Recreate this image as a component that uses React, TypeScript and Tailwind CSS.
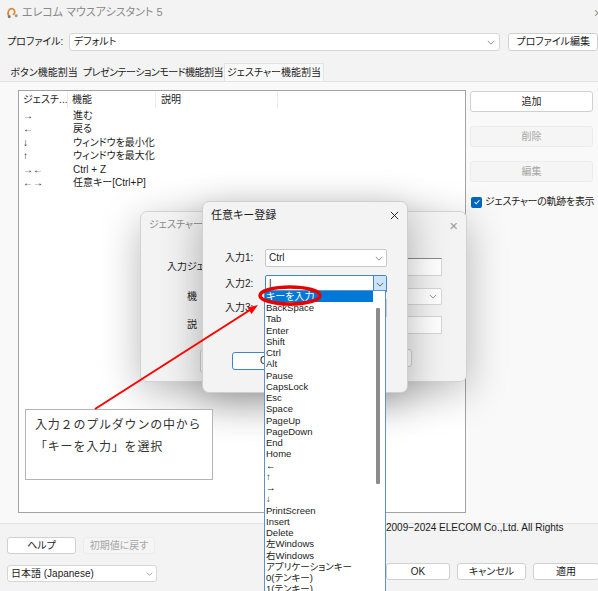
import type { FC } from 'react';

const Chevron: FC<{ className?: string }> = ({ className }) => (
  <svg viewBox="0 0 10 6" className={className} fill="none" stroke="currentColor" strokeWidth="1">
    <path d="M1 1l4 4 4-4" />
  </svg>
);

const Logo: FC = () => (
  <svg viewBox="0 0 14 14" className="w-[13px] h-[13px]">
    <path d="M3 11 C1 7 3 2 7 3 C10 4 10 8 8 9" fill="none" stroke="#e8822a" strokeWidth="1.8" strokeLinecap="round" />
    <circle cx="3.5" cy="11.5" r="1.6" fill="#7a7a7a" />
    <circle cx="11" cy="10.5" r="1.6" fill="#9a9a9a" />
  </svg>
);

const gestures = [
  ['→', '進む'],
  ['←', '戻る'],
  ['↓', 'ウィンドウを最小化'],
  ['↑', 'ウィンドウを最大化'],
  ['→←', 'Ctrl + Z'],
  ['←→', '任意キー[Ctrl+P]'],
];

const keys = [
  'キーを入力', 'BackSpace', 'Tab', 'Enter', 'Shift', 'Ctrl', 'Alt', 'Pause', 'CapsLock', 'Esc',
  'Space', 'PageUp', 'PageDown', 'End', 'Home', '←', '↑', '→', '↓', 'PrintScreen', 'Insert',
  'Delete', '左Windows', '右Windows', 'アプリケーションキー', '0(テンキー)', '1(テンキー)', '2(テンキー)',
];

export default function App() {
  return (
    <div className="relative w-[598px] h-[591px] overflow-hidden bg-[#f3f3f3] text-[#1b1b1b] text-[10px] leading-none font-['Liberation_Sans','Noto_Sans_CJK_JP',sans-serif] [font-feature-settings:'palt']">
      {/* Title bar */}
      <div className="flex items-center h-[25px] pl-[6px]">
        <Logo />
        <span className="ml-[3px] text-[11px] text-[#8a8a8a]">エレコム マウスアシスタント 5</span>
        <span className="ml-auto mr-[-4px] text-[14px] text-[#9a9a9a]">×</span>
      </div>

      {/* Profile row */}
      <div className="flex items-center h-[18px] mt-[8px]">
        <span className="w-[69px] pl-[7px]">プロファイル:</span>
        <div className="flex items-center w-[433px] h-[18px] px-[4px] bg-white border border-[#d6d6d6] rounded-[3px]">
          <span>デフォルト</span>
          <Chevron className="ml-auto w-[8px] h-[5px] text-[#777]" />
        </div>
        <div className="flex items-center justify-center ml-[8px] w-[90px] h-[18px] bg-white border border-[#d0d0d0] rounded-[3px]">
          プロファイル編集
        </div>
      </div>

      {/* Tabs */}
      <div className="flex items-end mt-[12px] pl-[6px] h-[18px] whitespace-nowrap">
        <div className="flex items-center justify-center w-[76px] h-[17px]">ボタン機能割当</div>
        <div className="flex items-center justify-center w-[142px] h-[17px] tracking-[-0.5px]">プレゼンテーションモード機能割当</div>
        <div className="flex items-center justify-center w-[100px] h-[18px] bg-[#f9f9f9] border border-b-0 border-[#e3e3e3]">ジェスチャー機能割当</div>
      </div>

      {/* Tab panel */}
      <div className="flex h-[443px] bg-[#f9f9f9] border-y border-[#e3e3e3]">
        <div className="ml-[18px] mt-[8px] w-[448px] h-[423px] bg-white border border-[#a3a3a3]">
          <div className="flex h-[17px] items-center whitespace-nowrap">
            <div className="w-[49px] pl-[4px] border-r border-[#ececec] h-full flex items-center overflow-hidden">ジェスチ...</div>
            <div className="w-[88px] pl-[4px] border-r border-[#ececec] h-full flex items-center">機能</div>
            <div className="w-[122px] pl-[5px] border-r border-[#ececec] h-full flex items-center">説明</div>
          </div>
          <div className="pt-[1px]">
            {gestures.map(([g, f]) => (
              <div key={f} className="flex items-center h-[13.5px]">
                <span className="w-[54px] pl-[4px]">{g}</span>
                <span>{f}</span>
              </div>
            ))}
          </div>
        </div>

        <div className="ml-[4px] mt-[9px] w-[123px] flex flex-col">
          <div className="flex items-center justify-center h-[21px] bg-white border border-[#d0d0d0] rounded-[3px]">追加</div>
          <div className="flex items-center justify-center h-[21px] mt-[14px] bg-[#f5f5f5] border border-[#ececec] rounded-[3px] text-[#a6a6a6]">削除</div>
          <div className="flex items-center justify-center h-[21px] mt-[14px] bg-[#f5f5f5] border border-[#ececec] rounded-[3px] text-[#a6a6a6]">編集</div>
          <div className="flex items-center mt-[14px] h-[12px] whitespace-nowrap">
            <div className="flex shrink-0 items-center justify-center w-[11px] h-[11px] ml-[1px] rounded-[2px] bg-[#0067c0]">
              <svg viewBox="0 0 10 10" className="w-[8px] h-[8px]" fill="none" stroke="white" strokeWidth="1.3">
                <path d="M2 5.2l2 2 4-4.4" />
              </svg>
            </div>
            <span className="ml-[3px] tracking-[-0.3px]">ジェスチャーの軌跡を表示</span>
          </div>
        </div>
      </div>

      {/* Bottom */}
      <div className="flex">
        <div className="pl-[7px] pt-[13px]">
          <div className="flex gap-[7px]">
            <div className="flex items-center justify-center w-[69px] h-[17px] bg-white border border-[#d0d0d0] rounded-[3px]">ヘルプ</div>
            <div className="flex items-center justify-center w-[72px] h-[17px] bg-[#f5f5f5] border border-[#ececec] rounded-[3px] text-[#a6a6a6]">初期値に戻す</div>
          </div>
          <div className="flex items-center mt-[11px] w-[150px] h-[17px] px-[3px] bg-white border border-[#d6d6d6] rounded-[3px]">
            <span>日本語 (Japanese)</span>
            <Chevron className="ml-auto w-[7px] h-[4px] text-[#777]" />
          </div>
        </div>
        <div className="ml-auto w-[212px] flex flex-col">
          <div className="h-[12px] mt-[-2px] flex items-center whitespace-nowrap">2009−2024 ELECOM Co.,Ltd. All Rights</div>
          <div className="flex mt-[29px] gap-[7px]">
            <div className="flex items-center justify-center w-[64px] h-[17px] bg-white border border-[#d0d0d0] rounded-[3px]">OK</div>
            <div className="flex items-center justify-center w-[69px] h-[17px] bg-white border border-[#d0d0d0] rounded-[3px]">キャンセル</div>
            <div className="flex items-center justify-center w-[66px] h-[17px] bg-white border border-[#d0d0d0] rounded-[3px] mr-[-6px]">適用</div>
          </div>
        </div>
      </div>

      {/* Back dialog: ジェスチャー編集 */}
      <div className="absolute left-[140px] top-[211px] w-[327px] h-[171px] rounded-[7px] bg-[#f3f3f3] border border-[#d2d2d2] shadow-[0_10px_40px_rgba(0,0,0,0.28)]">
        <div className="flex items-center h-[26px] pl-[8px] pr-[8px] text-[#8a8a8a]">
          <span className="w-[54px] overflow-hidden whitespace-nowrap">ジェスチャー編集</span>
          <span className="ml-auto text-[15px] text-[#9a9a9a]">×</span>
        </div>
        <div className="flex items-center mt-[20px] h-[18px]">
          <span className="w-[110px] pl-[26px]">
            <span className="block w-[36px] overflow-hidden whitespace-nowrap">入力ジェスチャー</span>
          </span>
          <div className="w-[191px] h-[18px] bg-white border border-[#d6d6d6] border-t-[#8a8a8a]" />
        </div>
        <div className="flex items-center mt-[12px] h-[17px]">
          <span className="w-[110px] pl-[46px]">機</span>
          <div className="flex items-center w-[191px] h-[17px] px-[4px] bg-white border border-[#d6d6d6] rounded-[2px]">
            <Chevron className="ml-auto w-[8px] h-[5px] text-[#777]" />
          </div>
        </div>
        <div className="flex items-center mt-[11px] h-[18px]">
          <span className="w-[110px] pl-[46px]">説</span>
          <div className="w-[191px] h-[18px] bg-white border border-[#d6d6d6]" />
        </div>
        <div className="flex mt-[15px] pl-[59px] gap-[52px]">
          <div className="w-[80px] h-[24px] bg-white border border-[#d0d0d0] rounded-[3px]" />
          <div className="w-[80px] h-[18px] bg-white border border-[#d0d0d0] rounded-[3px]" />
        </div>
      </div>

      {/* Front dialog: 任意キー登録 */}
      <div className="absolute left-[202px] top-[201px] w-[206px] h-[192px] rounded-[7px] bg-[#f3f3f3] border border-[#cfcfcf] shadow-[0_10px_40px_rgba(0,0,0,0.3)]">
        <div className="flex items-center h-[26px] pl-[8px] pr-[8px] text-[11px]">
          <span>任意キー登録</span>
          <svg viewBox="0 0 10 10" className="ml-auto w-[9px] h-[9px]" fill="none" stroke="#222" strokeWidth="1.1">
            <path d="M1 1l8 8M9 1l-8 8" />
          </svg>
        </div>
        <div className="flex items-center mt-[21px] h-[18px]">
          <span className="w-[62px] pl-[22px]">入力1:</span>
          <div className="flex items-center w-[122px] h-[18px] px-[3px] bg-white border border-[#c8c8c8] rounded-[2px]">
            <span>Ctrl</span>
            <Chevron className="ml-auto w-[8px] h-[5px] text-[#777]" />
          </div>
        </div>
        <div className="flex items-center mt-[8px] h-[18px]">
          <span className="w-[62px] pl-[22px]">入力2:</span>
          <div className="flex items-center w-[122px] h-[18px] pl-[3px] bg-white border border-[#3f86c8] rounded-[2px]">
            <span className="font-light">|</span>
            <div className="ml-auto flex items-center justify-center w-[13px] h-full bg-[#cce4f7] border-l border-[#3f86c8]">
              <Chevron className="w-[8px] h-[5px] text-[#444]" />
            </div>
          </div>
        </div>
        <div className="flex items-center mt-[6px] h-[18px]">
          <span className="w-[62px] pl-[22px]">入力3:</span>
          <div className="w-[122px] h-[18px] bg-white border border-[#c8c8c8]" />
        </div>
        <div className="flex mt-[35px] pl-[29px]">
          <div className="flex items-center pl-[27px] w-[70px] h-[18px] bg-white border-[1.5px] border-[#3f86c8] rounded-[3px]">
            <span className="block w-[7px] overflow-hidden">OK</span>
          </div>
        </div>
      </div>

      {/* Dropdown list */}
      <div className="absolute left-[264px] top-[290px] w-[122px] h-[320px] bg-white border border-[#5b94c8]">
        {keys.map((k, i) => (
          <div
            key={k}
            className={
              i === 0
                ? 'flex items-center h-[11.25px] w-[108px] pl-[1px] bg-[#0078d7] text-white text-[10px]'
                : 'flex items-center h-[11.25px] pl-[1px] text-[9.5px]'
            }
          >
            {k}
          </div>
        ))}
        <div className="absolute left-[111px] top-[17px] w-[4px] h-[176px] bg-[#8c8c8c] rounded-[1px]" />
      </div>

      {/* Callout */}
      <div className="absolute left-[25px] top-[409px] w-[188px] h-[71px] bg-white border border-[#b4b4b4] pl-[9px] pt-[3px] text-[12px] leading-[22px] tracking-[0.8px] [font-feature-settings:normal] font-['Noto_Sans_CJK_JP',sans-serif] text-[#333]">
        <div>入力２のプルダウンの中から</div>
        <div>「キーを入力」を選択</div>
      </div>

      {/* Annotation marks */}
      <svg className="absolute inset-0 pointer-events-none" width="598" height="591" viewBox="0 0 598 591">
        <line x1="95" y1="409" x2="250" y2="310" stroke="#ff0000" strokeWidth="2" />
        <polygon points="258,305 251.5,314 247.5,307.5" fill="#ff0000" />
        <ellipse cx="290" cy="295.5" rx="30" ry="8.5" fill="none" stroke="#e60000" strokeWidth="3.5" />
      </svg>
    </div>
  );
}
